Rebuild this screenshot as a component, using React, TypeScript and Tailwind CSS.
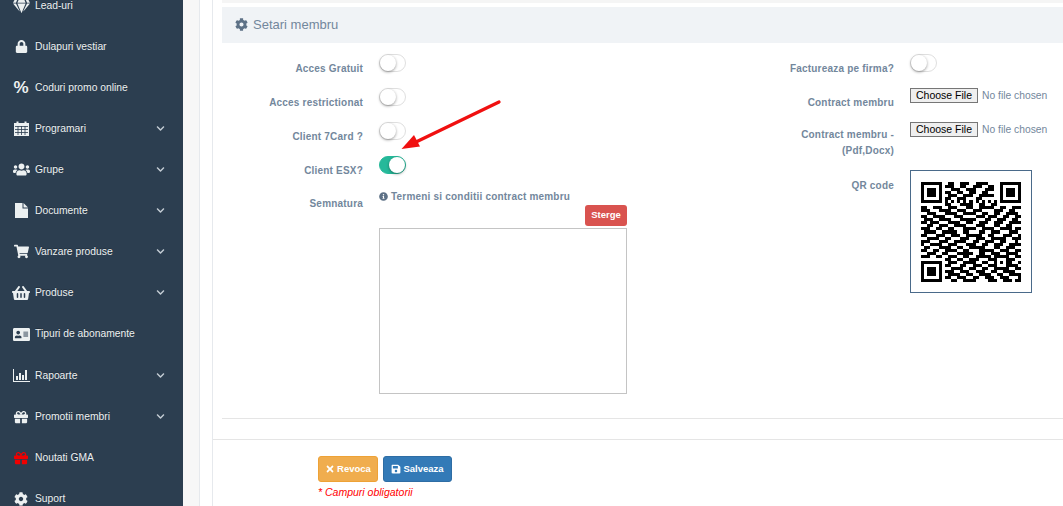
import React from 'react';
import {
  FaGem, FaLock, FaShoppingCart, FaShoppingBasket,
  FaAddressCard, FaUsers, FaGift, FaCog, FaChevronDown, FaInfoCircle, FaTimes, FaSave,
} from 'react-icons/fa';

function CalendarIcon() {
  return (
    <svg width="15" height="15" viewBox="0 0 15 15" fill="currentColor">
      <path d="M0 2h2.5V0.5h2V2h6V0.5h2V2H15v13H0Z" />
      <path d="M1 5.5h13M1 8.5h13M1 11.5h13M4 5v9M7.5 5v9M11 5v9" stroke="#2c3e50" strokeWidth="0.8" fill="none" />
    </svg>
  );
}

function FileIcon() {
  return (
    <svg width="13" height="15" viewBox="0 0 13 15" fill="currentColor">
      <path d="M0 0h7.5v5.5H13V15H0Z" />
      <path d="M8.5 0 13 4.5H8.5Z" />
    </svg>
  );
}

function ChartIcon() {
  return (
    <svg width="17" height="13" viewBox="0 0 17 13" fill="currentColor">
      <path d="M0 0h1v12h16v1H0Z" />
      <path d="M3 7h2v4H3ZM6 4h2v7H6ZM9 6h2v5H9ZM12 1h2v10h-2Z" />
    </svg>
  );
}

function PercentIcon() {
  return <span className="text-[17px] leading-none font-bold">%</span>;
}

const menu = [
  { label: 'Lead-uri', icon: <FaGem className="text-[17px]" /> },
  { label: 'Dulapuri vestiar', icon: <FaLock className="text-[13px]" /> },
  { label: 'Coduri promo online', icon: <PercentIcon /> },
  { label: 'Programari', icon: <CalendarIcon />, more: true },
  { label: 'Grupe', icon: <FaUsers className="text-[17px]" />, more: true },
  { label: 'Documente', icon: <FileIcon />, more: true },
  { label: 'Vanzare produse', icon: <FaShoppingCart className="text-[15px]" />, more: true },
  { label: 'Produse', icon: <FaShoppingBasket className="text-[18px]" />, more: true },
  { label: 'Tipuri de abonamente', icon: <FaAddressCard className="text-[17px]" />, tall: true },
  { label: 'Rapoarte', icon: <ChartIcon />, more: true },
  { label: 'Promotii membri', icon: <FaGift className="text-[14px]" />, more: true },
  { label: 'Noutati GMA', icon: <FaGift className="text-[14px] text-[#f00000]" /> },
  { label: 'Suport', icon: <FaCog className="text-[14px]" /> },
];

const qrRows = [
  '111111100110011100111100001111111',
  '100000101110011001110011001000001',
  '101110100011100111000111001011101',
  '101110101100110011001100001011101',
  '101110100111001110011111001011101',
  '100000101100111000110000001000001',
  '111111101010101010101010101111111',
  '000000001100011110011001100000000',
  '110011100111000110011111001100111',
  '111000111100111001110000111001100',
  '001110001111001111001100110011110',
  '110011110001110000111011100110011',
  '011100111100011111000110011100110',
  '110111000111100110011100111001111',
  '001100111001111000111000110011000',
  '111001100110001111001111001111011',
  '011110011111001100011001110001110',
  '110001110011100111110011000111001',
  '001111001100011100111001111100111',
  '111000111001111001100111001100010',
  '100111100111000111001100111001111',
  '011000111100110011111000110011100',
  '110011001111001100011111001110011',
  '001110011000111110011001110011110',
  '111001100111001100111110111110011',
  '000000001100110011100011100011100',
  '111111100111001111001100101011001',
  '100000101100011001110011100011110',
  '101110100011110011001100111110011',
  '101110101110011100111001100111100',
  '101110100111100110011110011001111',
  '100000101100111001100111001110001',
  '111111100011001111000011100111011',
];

function QrCode() {
  return (
    <svg width="100" height="100" viewBox="0 0 33 33" shapeRendering="crispEdges">
      {qrRows.map((row, y) =>
        row.split('').map((cell, x) => (cell === '1' ? <rect key={`${x}-${y}`} x={x} y={y} width="1" height="1" fill="#000" /> : null)),
      )}
    </svg>
  );
}

function Toggle({ on }: { on?: boolean }) {
  return (
    <span className={`flex h-[18px] w-[27px] rounded-full border ${on ? 'justify-end border-[#26b99a] bg-[#26b99a]' : 'border-[#dfdfdf] bg-white'}`}>
      <span className="h-[16px] w-[16px] rounded-full bg-white shadow-[0_1px_3px_rgba(0,0,0,0.4)]" />
    </span>
  );
}

function FileInput() {
  return (
    <input
      type="file"
      className="block w-[153px] text-[10.3px] leading-[15px] text-[#73879c] file:mr-[4px] file:h-[15px] file:border file:border-[#767676] file:bg-[#efefef] file:px-[5px] file:py-0 file:text-[10.5px] file:leading-[13px] file:text-black"
    />
  );
}

function Row({ label, width, children }: { label: React.ReactNode; width: string; children: React.ReactNode }) {
  return (
    <div className="flex h-[34px] items-start gap-[16px]">
      <label className={`${width} pt-[11px] text-right text-[10px] font-bold leading-[13px] tracking-[0.2px] text-[#73879c]`}>{label}</label>
      <div className="pt-[3px]">{children}</div>
    </div>
  );
}

export default function App() {
  return (
    <div className="relative flex h-[506px] w-[1063px] overflow-hidden bg-white font-['Liberation_Sans',Arial,sans-serif]">
      {/* Sidebar */}
      <aside className="w-[183px] shrink-0 overflow-hidden bg-[#2c3e50]">
        <ul className="-mt-[15px]">
          {menu.map((item) => (
            <li
              key={item.label}
              className={`flex items-center text-[10.3px] text-[#ecf0f1] [text-shadow:rgba(0,0,0,0.25)_0_-1px_0] ${item.tall ? 'h-[42px]' : 'h-[41px]'}`}
            >
              <span className="flex w-[35px] justify-center pl-[7px] text-[#ecf0f1]">{item.icon}</span>
              <span className="flex-1">{item.label}</span>
              {item.more && <FaChevronDown className="mr-[18px] text-[9px] text-[#c4ccd4]" />}
            </li>
          ))}
        </ul>
      </aside>

      {/* Gutter */}
      <div className="w-[17px] shrink-0 border-r border-[#e6e9ed] bg-[#f7f7f7]" />
      <div className="w-[13px] shrink-0 border-r border-[#e6e9ed] bg-white" />

      {/* Main panel */}
      <main className="min-w-0 flex-1">
        <div className="pl-[9px]">
          <div className="h-[3px] bg-[#f5f5f5]" />
          <div className="mt-[4px] flex h-[36px] items-center gap-[5px] bg-[#f0f3f6] pb-[1px] pl-[13px] text-[13px] text-[#73879c]">
            <FaCog className="text-[13px] text-[#5d7186]" />
            <span>Setari membru</span>
          </div>

          <div className="flex pt-[8px]">
            {/* Left column */}
            <div className="w-[500px]">
              <Row label="Acces Gratuit" width="w-[141px]"><Toggle /></Row>
              <Row label="Acces restrictionat" width="w-[141px]"><Toggle /></Row>
              <Row label="Client 7Card ?" width="w-[141px]"><Toggle /></Row>
              <Row label="Client ESX?" width="w-[141px]"><Toggle on /></Row>
              <div className="flex items-start gap-[16px]">
                <label className="w-[141px] pt-[10px] text-right text-[10px] font-bold leading-[13px] tracking-[0.2px] text-[#73879c]">Semnatura</label>
                <div className="w-[248px]">
                  <div className="flex h-[18px] items-center gap-[3px] text-[10px] font-bold tracking-[0.2px] text-[#73879c]">
                    <FaInfoCircle className="text-[9px] text-[#5d7186]" />
                    <span>Termeni si conditii contract membru</span>
                  </div>
                  <div className="flex justify-end">
                    <button className="h-[21px] w-[42px] rounded-[3px] bg-[#d9534f] text-[9.5px] font-bold text-white">Sterge</button>
                  </div>
                  <div className="mt-[2px] h-[166px] border border-[#c4c4c4] bg-white" />
                </div>
              </div>
            </div>

            {/* Right column */}
            <div className="flex-1">
              <Row label="Factureaza pe firma?" width="w-[172px]"><Toggle /></Row>
              <Row label="Contract membru" width="w-[172px]"><FileInput /></Row>
              <div className="flex h-[51px] items-start gap-[16px]">
                <label className="w-[172px] pt-[8px] text-right text-[10px] font-bold leading-[16px] tracking-[0.2px] text-[#73879c]">
                  Contract membru -<br />(Pdf,Docx)
                </label>
                <div className="pt-[3px]"><FileInput /></div>
              </div>
              <div className="flex items-start gap-[16px]">
                <label className="w-[172px] pt-[9px] text-right text-[10px] font-bold leading-[13px] tracking-[0.2px] text-[#73879c]">QR code</label>
                <div className="flex h-[123px] w-[122px] items-center justify-center border border-[#4a6a8a] bg-white">
                  <QrCode />
                </div>
              </div>
            </div>
          </div>

          <div className="mt-[24px] h-[1px] bg-[#e5e5e5]" />
        </div>

        <div className="mt-[20px] border-t border-[#e5e5e5] pl-[105px] pt-[16px]">
          <div className="flex gap-[5px]">
            <button className="flex h-[26px] w-[60px] items-center justify-center gap-[2px] rounded-[3px] border border-[#eea236] bg-[#f0ad4e] text-[9.5px] font-bold text-white">
              <FaTimes className="text-[10px]" /> Revoca
            </button>
            <button className="flex h-[26px] w-[69px] items-center justify-center gap-[2px] rounded-[3px] border border-[#2e6da4] bg-[#337ab7] text-[9.5px] font-bold text-white">
              <FaSave className="text-[10px]" /> Salveaza
            </button>
          </div>
          <p className="mt-[3px] text-[10.5px] italic text-[#f00]">* Campuri obligatorii</p>
        </div>
      </main>

      {/* Annotation arrow */}
      <svg className="pointer-events-none absolute left-[390px] top-[95px]" width="120" height="60" viewBox="390 95 120 60">
        <path d="M499 102 L416 142" stroke="#f01010" strokeWidth="3.3" strokeLinecap="round" />
        <path d="M401.5 149 L414 135 L420 146.5 Z" fill="#f01010" />
      </svg>
    </div>
  );
}
